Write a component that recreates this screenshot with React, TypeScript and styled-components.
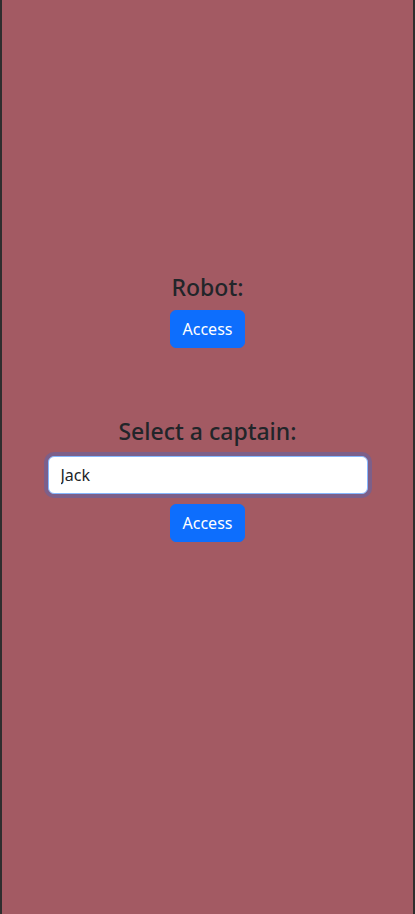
import React from "react";
import styled, { createGlobalStyle } from "styled-components";

const GlobalStyle = createGlobalStyle`
  html, body {
    margin: 0;
    padding: 0;
  }
  body {
    font-family: "Noto Sans", "Open Sans", "Liberation Sans", sans-serif;
    color: #212529;
  }
  * { box-sizing: border-box; }
`;

const Page = styled.main`
  width: 415px;
  min-height: 914px;
  background: #a35a63;
  border-left: 2px solid #2e2e2e;
  border-right: 2px solid #2e2e2e;
  display: flex;
  flex-direction: column;
  align-items: center;
  padding-top: 273px;
  gap: 69px;
`;

const Section = styled.section`
  display: flex;
  flex-direction: column;
  align-items: center;
`;

const Heading = styled.h4<{ $gap: number }>`
  margin: 0 0 ${(p) => p.$gap}px 0;
  font-size: 23px;
  line-height: 1.25;
  font-weight: 500;
  color: #212529;
`;

const Button = styled.button`
  height: 38px;
  padding: 6px 12px;
  font-family: inherit;
  font-size: 16px;
  line-height: 1.5;
  color: #fff;
  background: #0d6efd;
  border: 1px solid #0d6efd;
  border-radius: 6px;
  cursor: pointer;
`;

const Input = styled.input`
  width: 320px;
  height: 38px;
  margin-bottom: 10px;
  padding: 6px 12px;
  font-family: inherit;
  font-size: 16px;
  line-height: 1.5;
  color: #212529;
  background: #fff;
  border: 1px solid #86b7fe;
  border-radius: 6px;
  box-shadow: 0 0 0 4px rgba(13, 110, 253, 0.25);
  outline: none;
`;

export default function App() {
  return (
    <>
      <GlobalStyle />
      <Page>
        <Section>
          <Heading $gap={8}>Robot:</Heading>
          <Button>Access</Button>
        </Section>
        <Section>
          <Heading $gap={10}>Select a captain:</Heading>
          <Input defaultValue="Jack" />
          <Button>Access</Button>
        </Section>
      </Page>
    </>
  );
}
